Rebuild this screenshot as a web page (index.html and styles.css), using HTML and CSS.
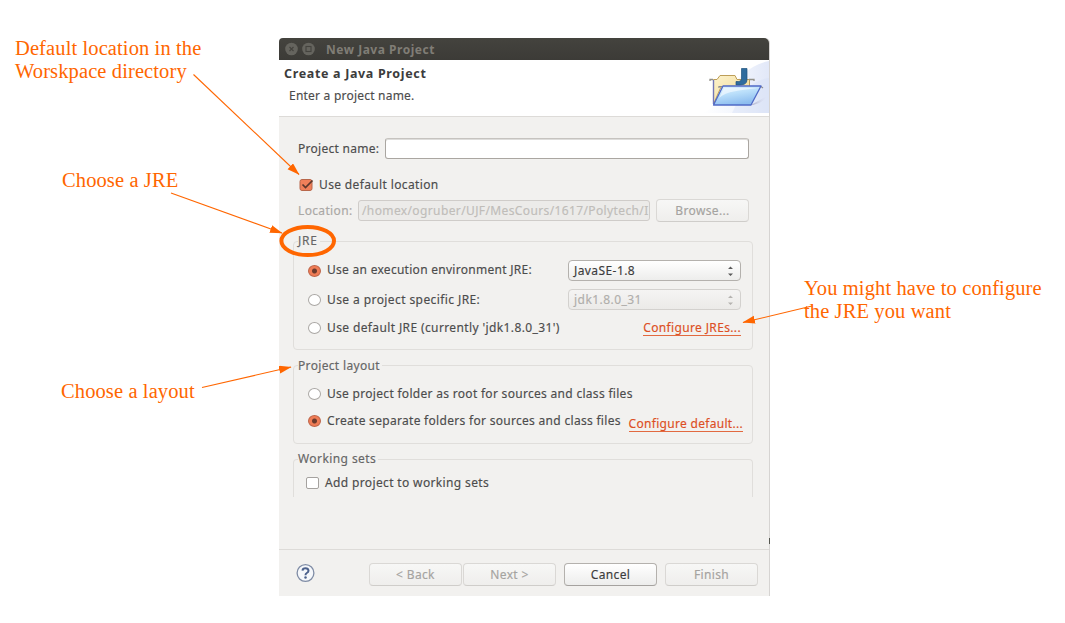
FILE: index.html
```html
<!DOCTYPE html>
<html lang="en">
<head>
<meta charset="utf-8">
<title>New Java Project</title>
<link rel="stylesheet" href="styles.css">
</head>
<body>
<main class="dialog">
  <header class="titlebar">
    <svg class="winbtns" width="32" height="14" viewBox="0 0 32 14">
      <circle cx="6.500" cy="7" r="6.300" fill="#65645e"/>
      <path d="M4.500 5l4 4M8.500 5l-4 4" stroke="#44433e" stroke-width="1.100"/>
      <circle cx="23.500" cy="7" r="6.300" fill="#65645e"/>
      <rect x="21" y="4.500" width="5" height="5" fill="none" stroke="#44433e" stroke-width="1.100"/>
    </svg>
    <span class="t-title">New Java Project</span>
  </header>
  <section class="banner">
    <div class="banner-text">
      <h1 class="t-heading">Create a Java Project</h1>
      <p class="t-sub">Enter a project name.</p>
    </div>
    <svg class="banner-art" width="66" height="56" viewBox="0 0 66 56">
      <defs>
        <linearGradient id="sky" x1="0" x2="1" y1="0" y2="0"><stop offset="0" stop-color="#fff"/><stop offset=".5" stop-color="#f3f6fd"/><stop offset="1" stop-color="#e2e8f8"/></linearGradient>
        <linearGradient id="paper" x1="0" x2="1" y1="0" y2="1"><stop offset="0" stop-color="#fdf3cd"/><stop offset="1" stop-color="#efd68f"/></linearGradient>
        <linearGradient id="blue" x1="0" x2=".4" y1="0" y2="1"><stop offset="0" stop-color="#e6f5fe"/><stop offset=".5" stop-color="#b9defa"/><stop offset="1" stop-color="#8dbdef"/></linearGradient>
        <linearGradient id="shade" x1="0" x2="1" y1="0" y2="0"><stop offset="0" stop-color="#a9a9c4"/><stop offset="1" stop-color="#d9dff2" stop-opacity="0"/></linearGradient>
      </defs>
      <path d="M0 53C25 43 31 8 66 1V53Z" fill="url(#sky)"/>
      <path d="M66 18C48 20 38 34 29 53H66Z" fill="#d5def5" opacity=".4"/>
      <path d="M48 45L64 36Q60 43 50 45Z" fill="url(#shade)"/>
      <path d="M10.500 19.500V44L18 27H46.500V19.500H34L32 15.500H17L14 19.500Z" fill="url(#paper)" stroke="#bd9e58"/>
      <path d="M7 21V19.500H10M46 19.500H51V21" fill="none" stroke="#94928a" stroke-width="1.300"/>
      <path d="M10.500 20V44" stroke="#7377b5" stroke-width="1.400"/>
      <path d="M38.500 8.500H44V20Q44 26 33 25V21.500Q38 22 38.500 19Z" fill="#2f6c9e" stroke="#1f527d" stroke-width=".7"/>
      <path d="M16 28V26.500H58L60 28" fill="none" stroke="#8c8c91" stroke-width="1.200"/>
      <path d="M20 26H58L48 45H10.500Z" fill="url(#blue)" stroke="#4f69c6" stroke-width="1.300" stroke-linejoin="round"/>
      <path d="M21 28H55C39 30 23 31 16 38Z" fill="#f4fbff" opacity=".65"/>
    </svg>
  </section>
  <section class="content">
    <div class="row name-row">
      <label class="t-name">Project name:</label>
      <div class="field name-field"></div>
    </div>
    <div class="row default-row">
      <svg class="tick" width="15" height="15" viewBox="0 0 15 15">
        <rect x="1" y="1.500" width="12" height="11" rx="2" fill="#f0805a" stroke="#b8674b"/>
        <path d="M3.500 6.500L6.500 9.500L13.500 2.500" fill="none" stroke="#5d372c" stroke-width="1.700"/>
      </svg>
      <span class="t-default">Use default location</span>
    </div>
    <div class="row location-row">
      <label class="dim t-loc">Location:</label>
      <div class="field path-field"><span class="t-path">/homex/ogruber/UJF/MesCours/1617/Polytech/I</span></div>
      <button class="button off browse"><span class="t-browse">Browse...</span></button>
    </div>
    <div class="groups">
      <fieldset class="group jre">
        <legend class="t-jre">JRE</legend>
        <div class="row option"><i class="radio on"></i><span class="t-env">Use an execution environment JRE:</span>
          <div class="combo"><span class="t-se">JavaSE-1.8</span><svg width="7" height="12" viewBox="0 0 7 12"><path d="M1 4L3.500 1.500L6 4ZM1 8.500H6L3.500 11Z" fill="#5a5a5a"/></svg></div></div>
        <div class="row option"><i class="radio"></i><span class="t-spec">Use a project specific JRE:</span>
          <div class="combo off"><span class="t-jdk">jdk1.8.0_31</span><svg width="7" height="12" viewBox="0 0 7 12"><path d="M1 4L3.500 1.500L6 4ZM1 8.500H6L3.500 11Z" fill="#b5b3b0"/></svg></div></div>
        <div class="row option third"><i class="radio"></i><span class="t-cur">Use default JRE (currently 'jdk1.8.0_31')</span><a class="link t-conf">Configure JREs...</a></div>
      </fieldset>
      <fieldset class="group layout">
        <legend class="t-layout">Project layout</legend>
        <div class="row option"><i class="radio"></i><span class="t-root">Use project folder as root for sources and class files</span></div>
        <div class="row option second"><i class="radio on"></i><span class="t-sep">Create separate folders for sources and class files</span><a class="link low t-confd">Configure default...</a></div>
      </fieldset>
      <fieldset class="group sets">
        <legend class="t-sets">Working sets</legend>
        <div class="row option"><i class="check"></i><span class="t-add">Add project to working sets</span></div>
      </fieldset>
    </div>
  </section>
  <footer class="actions">
    <svg class="help" width="20" height="20" viewBox="0 0 20 20">
      <circle cx="10.500" cy="10" r="8.400" fill="#f6f8fb" stroke="#7f8ca5" stroke-width="1.300"/>
      <path d="M7.500 7.600Q7.700 5.200 10.500 5.200T13.500 7.700Q13.500 9 11.800 10Q10.500 10.800 10.500 12.200" fill="none" stroke="#4d628d" stroke-width="2"/>
      <circle cx="10.500" cy="14.600" r="1.250" fill="#4d628d"/>
    </svg>
    <button class="button off"><span class="t-back">&lt; Back</span></button>
    <button class="button off next"><span class="t-next">Next &gt;</span></button>
    <button class="button cancel"><span class="t-cancel">Cancel</span></button>
    <button class="button off finish"><span class="t-finish">Finish</span></button>
  </footer>
  <i class="speck"></i>
</main>

<svg class="arrows" width="1065" height="623" viewBox="0 0 1065 623">
  <defs><marker id="head" markerUnits="userSpaceOnUse" markerWidth="14" markerHeight="10" refX="12" refY="4" orient="auto"><path d="M0 0L12.500 4L0 8Z" fill="#f60"/></marker></defs>
  <g fill="none" stroke="#f60" stroke-width="1.100" marker-end="url(#head)">
    <path d="M193.500 74.500L299 174.500"/>
    <path d="M171 193L282 233"/>
    <path d="M202 387.500L291 367"/>
    <path d="M812 306L743 322.500"/>
  </g>
  <ellipse cx="307.700" cy="241" rx="26.300" ry="14" fill="none" stroke="#f60" stroke-width="4"/>
</svg>
<p class="note note-location">Default location in the<br>Worskpace directory</p>
<p class="note note-jre">Choose a JRE</p>
<p class="note note-layout">Choose a layout</p>
<p class="note note-config">You might have to configure<br>the JRE you want</p>
</body>
</html>
```
FILE: styles.css
```css
* { box-sizing: border-box; }
body {
  margin: 0;
  width: 1065px;
  height: 623px;
  overflow: hidden;
  position: relative;
  padding: 38px 0 0 279px;
  background: #fff;
  color: #4c4c4c;
  font: 12px/18px "Noto Sans", "Open Sans", sans-serif;
  white-space: nowrap;
}
h1, p { margin: 0; }
.dialog {
  position: relative;
  width: 491px;
  height: 558px;
  display: flex;
  flex-direction: column;
  background: #f2f1ef;
  border-right: 1px solid #d6d4d2;
  border-radius: 4px 5px 0 0;
  -webkit-text-stroke: 0.15px;
}
.titlebar {
  height: 22px;
  flex: none;
  display: flex;
  align-items: center;
  padding-left: 6px;
  background: linear-gradient(#44433e, #3c3b37);
  border-radius: 4px 5px 0 0;
  color: #807d76;
  font-weight: bold;
}
.winbtns { margin-right: 9px; }
.t-title { padding-top: 1px; letter-spacing: 0.52px; -webkit-text-stroke: 0; }
.banner {
  height: 57px;
  flex: none;
  display: flex;
  justify-content: space-between;
  background: #fff;
  border-bottom: 1px solid #dddbd8;
}
.banner-text { padding: 5px 0 0 5px; }
.t-heading { font-size: 12.5px; line-height: 18px; letter-spacing: 0.66px; color: #3c3c3c; -webkit-text-stroke: 0; }
.t-sub { padding: 4px 0 0 5px; letter-spacing: 0.22px; }
.content { flex: 1; padding: 21px 16px 0 14px; }
.row { display: flex; align-items: center; }
.name-row { height: 21px; padding: 0 4px 0 5px; }
.name-row label { width: 87px; letter-spacing: 0.28px; }
.field {
  height: 21px;
  border: 1px solid #aaa6a1;
  border-top-color: #c6c3bf;
  border-radius: 3px;
  background: #fff;
}
.name-field { flex: 1; box-shadow: inset 0 1px #dedddb; }
.default-row { height: 20px; margin-top: 16px; padding-left: 6px; }
.tick { margin-right: 5px; }
.t-default { letter-spacing: 0.36px; }
.location-row { height: 22px; margin-top: 4px; padding-left: 5px; }
.location-row label { width: 60px; padding-top: 1px; letter-spacing: 0.35px; }
.dim { color: #aaa8a5; }
.path-field {
  width: 292px;
  padding: 1px 0 0 3px;
  overflow: hidden;
  background: #ecebe9;
  border-color: #cfccc9;
  color: #c0bdb9;
  letter-spacing: 0.38px;
}
.button {
  width: 93px;
  height: 23px;
  padding: 1px 0 0;
  font: inherit;
  letter-spacing: 0.35px;
  color: #3c3c3c;
  border: 1px solid #b4b1ad;
  border-bottom-color: #a5a29f;
  border-radius: 4px;
  background: linear-gradient(#fff, #ededec);
}
.button.off {
  color: #a5a3a0;
  border-color: #dad8d5;
  border-bottom-color: #cfcdca;
  background: linear-gradient(#f7f7f6, #efeeec);
}
.browse { margin-left: 6px; }
.groups { display: flex; flex-direction: column; gap: 6px; margin-top: 11px; }
.group {
  margin: 0;
  min-width: 0;
  padding: 6px 11px 0 4px;
  border: 1px solid #e0dedb;
  border-radius: 4px;
}
.group legend { padding: 0 2px 0 0; height: 18px; color: #666; }
.t-jre { letter-spacing: 0.8px; }
.t-layout { letter-spacing: 0.33px; line-height: 20px; }
.t-sets { letter-spacing: 0.42px; }
.jre { height: 118px; }
.layout { height: 88px; }
.sets { height: 47px; padding-top: 0; border-bottom: 0; border-radius: 4px 4px 0 0; }
.option { height: 29px; padding-left: 10px; }
.third { height: 28px; }
.layout .option { height: 28px; }
.layout .second { height: 26px; margin-right: -2px; }
.t-env { letter-spacing: 0.28px; position: relative; top: -1px; }
.t-spec { letter-spacing: 0.41px; }
.t-cur { letter-spacing: 0.38px; }
.t-root { letter-spacing: 0.3px; }
.t-sep { letter-spacing: 0.3px; }
.t-add { letter-spacing: 0.36px; }
.t-se { letter-spacing: 0.42px; }
.t-jdk { letter-spacing: 0.45px; }
.radio {
  width: 13px;
  height: 12px;
  flex: none;
  margin-right: 6px;
  border: 1px solid #aaa7a4;
  border-radius: 50%;
  background: #fff;
}
.radio.on {
  border-color: #bd6347;
  background: radial-gradient(circle, #6b3a2c 0 2px, #ef7c55 3px);
}
.check {
  width: 13px;
  height: 12px;
  margin: 0 6px 0 -2px;
  border: 1px solid #a5a29f;
  border-radius: 2px;
  background: #fff;
}
.combo {
  width: 173px;
  height: 21px;
  margin-left: auto;
  padding: 0 6px 0 5px;
  display: flex;
  align-items: center;
  justify-content: space-between;
  color: #3c3c3c;
  border: 1px solid #b4b1ad;
  border-radius: 4px;
  background: linear-gradient(#fff, #ededec);
}
.combo.off { color: #b0aeab; border-color: #d3d1ce; background: linear-gradient(#f5f4f3, #ebeae8); }
.link { margin-left: auto; line-height: 14px; height: 15px; color: #dd4f24; border-bottom: 1px solid #e2693f; }
.t-conf { letter-spacing: 0.36px; }
.t-confd { letter-spacing: 0.3px; }
.low { position: relative; top: 3px; }
.actions {
  height: 47px;
  flex: none;
  display: flex;
  align-items: center;
  padding: 2px 0 0 16px;
  border-top: 1px solid #dddbd8;
}
.help { margin: 0 54px 2px 0; }
.next { margin-left: 1px; }
.cancel, .finish { margin-left: 8px; }
.speck { position: absolute; right: -1px; top: 500px; width: 1px; height: 6px; background: #54564f; }
.arrows { position: absolute; left: 0; top: 0; }
.note { position: absolute; color: #f60; font: 20.5px/23px "Liberation Serif", serif; letter-spacing: 0.11px; }
.note-location { left: 15px; top: 37px; }
.note-jre { left: 62px; top: 169px; }
.note-layout { left: 61px; top: 380px; }
.note-config { left: 804px; top: 277px; }
```
